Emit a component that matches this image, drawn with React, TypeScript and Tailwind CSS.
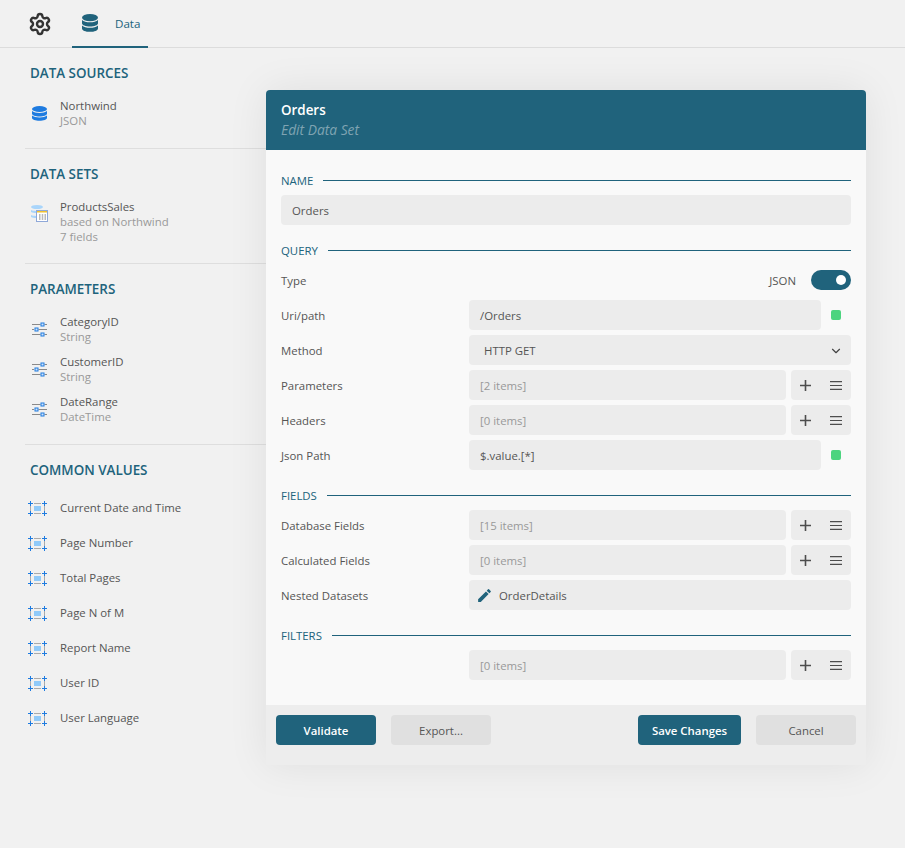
import React from "react";
import { Settings, ChevronDown } from "lucide-react";
import { MdEdit } from "react-icons/md";

const DbIcon = ({ className }: { className: string }) => (
  <svg viewBox="0 0 16 18" preserveAspectRatio="none" className={`shrink-0 ${className}`} fill="currentColor">
    <ellipse cx="8" cy="3.6" rx="8" ry="3.6" />
    <path d="M0 6v3.2c0 1.9 3.6 3.3 8 3.3s8-1.4 8-3.3V6c-1.6 1.5-4.6 2.3-8 2.3S1.6 7.5 0 6z" />
    <path d="M0 11.4v3c0 1.9 3.6 3.4 8 3.4s8-1.5 8-3.4v-3c-1.6 1.5-4.6 2.3-8 2.3s-6.4-.8-8-2.3z" />
  </svg>
);

const ParamIcon = () => (
  <svg width="16" height="15" viewBox="0 0 16 15" className="shrink-0" fill="none">
    <path d="M0 2.500H8.500M12.500 2.500H15M6.500 7.500H15M0 7.500H2M0 12.500H8.500M12.500 12.500H15" stroke="#8a8a8a" />
    <rect x="9" y="1" width="3" height="3" stroke="#1e7be0" fill="#cfe4fb" />
    <rect x="3" y="6" width="3" height="3" stroke="#1e7be0" fill="#cfe4fb" />
    <rect x="9" y="11" width="3" height="3" stroke="#1e7be0" fill="#cfe4fb" />
  </svg>
);

const ValueIcon = () => (
  <svg width="19" height="16" viewBox="0 0 19 16" className="shrink-0" fill="none">
    <rect x="6" y="6" width="7" height="5" fill="#90caf9" />
    <path d="M6 3.500H13M6 13.500H13M2.500 6V11M16.500 6V11" stroke="#aaa" />
    <path d="M0 3.500H5M2.500 1V6M14 3.500H19M16.500 1V6M0 13.500H5M2.500 11V16M14 13.500H19M16.500 11V16" stroke="#1e7be0" />
  </svg>
);

const DataSetIcon = () => (
  <svg width="17" height="17" viewBox="0 0 17 17" className="shrink-0 -ml-px" fill="none">
    <ellipse cx="6" cy="2" rx="6" ry="2" fill="#a9d5fb" />
    <path d="M0 5c1.500.600 3 .800 5 .900V8C3 8 1.500 7.700 0 7zM0 10c1.500.600 3 .800 5 .900V13C3 13 1.500 12.700 0 12z" fill="#a9d5fb" />
    <rect x="5.500" y="5.500" width="11" height="11" fill="#fff" stroke="#8fa8d8" />
    <rect x="6" y="6" width="10" height="1.500" fill="#f2c230" />
    <path d="M8 10h1.500M10.750 10h1.500M13.500 10h1.500M8 12h1.500M10.750 12h1.500M13.500 12h1.500M8 14h1.500M10.750 14h1.500M13.500 14h1.500" stroke="#777" />
  </svg>
);

const PlusGlyph = () => (
  <svg width="11" height="11" viewBox="0 0 11 11" fill="none" stroke="#4d4d4d" strokeWidth="1.600">
    <path d="M0 5.500H11M5.500 0V11" />
  </svg>
);

const MenuGlyph = () => (
  <svg width="12" height="9" viewBox="0 0 12 9" fill="none" stroke="#4d4d4d" strokeWidth="1.200">
    <path d="M0 .600H12M0 4.500H12M0 8.400H12" />
  </svg>
);

function SideHeading({ children }: { children: React.ReactNode }) {
  return <h2 className="h-5 text-[13.4px] leading-5 font-semibold text-[#20637c]">{children}</h2>;
}

function SideItem({ icon, name, lines = [], iconClass = "" }: { icon: React.ReactNode; name: string; lines?: string[]; iconClass?: string }) {
  return (
    <div className="flex items-center">
      <div className={`w-[30px] flex justify-start pl-0.5 ${iconClass}`}>{icon}</div>
      <div className="text-[11.4px] leading-[15px]">
        <div className="text-[#555]">{name}</div>
        {lines.map((l) => (
          <div key={l} className="text-[#999]">{l}</div>
        ))}
      </div>
    </div>
  );
}

function SectionTitle({ children }: { children: React.ReactNode }) {
  return (
    <div className="h-[30px] flex items-center gap-2.5">
      <span className="text-[11.4px] pt-0.5 text-[#20637c]">{children}</span>
      <div className="flex-1 h-px bg-[#20637c]" />
    </div>
  );
}

function FieldBox({ children, muted, className = "" }: { children?: React.ReactNode; muted?: boolean; className?: string }) {
  return (
    <div className={`h-[30px] rounded-sm bg-[#ececec] flex items-center px-[11px] pt-0.5 text-[11.4px] ${muted ? "text-[#999]" : "text-[#555]"} ${className}`}>
      {children}
    </div>
  );
}

function Row({ label, children }: { label?: string; children: React.ReactNode }) {
  return (
    <div className="h-[30px] flex items-center">
      <div className="w-[188px] shrink-0 pt-0.5 text-[11.4px] text-[#555]">{label}</div>
      <div className="flex-1 flex items-center min-w-0">{children}</div>
    </div>
  );
}

function ItemsRow({ label, value }: { label?: string; value: string }) {
  return (
    <Row label={label}>
      <FieldBox muted className="flex-1">{value}</FieldBox>
      <div className="ml-[5px] w-[60px] h-[30px] rounded-sm bg-[#ececec] flex items-center justify-around">
        <PlusGlyph />
        <MenuGlyph />
      </div>
    </Row>
  );
}

function StatusRow({ label, value }: { label: string; value: string }) {
  return (
    <Row label={label}>
      <FieldBox className="flex-1">{value}</FieldBox>
      <div className="mx-2.5 w-2.5 h-2.5 rounded-[2px] bg-[#4cd47f]" />
    </Row>
  );
}

function Divider() {
  return <div className="h-px bg-[#dedede]" />;
}

export default function App() {
  return (
    <div className="relative w-[905px] h-[848px] overflow-hidden bg-[#f1f1f1] font-['Open_Sans',sans-serif]">
      {/* Tabs */}
      <div className="h-12 border-b border-[#dcdcdc] flex pl-[25px]">
        <div className="w-[30px] flex items-center justify-center text-[#333] h-[47px]">
          <Settings size={24} strokeWidth={2.4} />
        </div>
        <div className="ml-[17px] w-[76px] h-12 border-b-2 border-[#20637c] flex items-center pl-[10px] gap-[17px] text-[#20637c]">
          <DbIcon className="w-4 h-[18px]" />
          <span className="text-[11.6px] pt-0.5">Data</span>
        </div>
      </div>

      {/* Side panel */}
      <div className="w-[300px] pl-[25px]">
        <div className="pl-[5px] pt-[15px] pb-5">
          <SideHeading>DATA SOURCES</SideHeading>
          <div className="mt-[15px]">
            <SideItem icon={<DbIcon className="w-[15px] h-[15px] text-[#1e7be0]" />} name="Northwind" lines={["JSON"]} />
          </div>
        </div>
        <Divider />
        <div className="pl-[5px] pt-[15px] pb-[19px]">
          <SideHeading>DATA SETS</SideHeading>
          <div className="mt-[15px]">
            <SideItem icon={<DataSetIcon />} iconClass="self-start mt-[6px]" name="ProductsSales" lines={["based on Northwind", "7 fields"]} />
          </div>
        </div>
        <Divider />
        <div className="pl-[5px] pt-[15px] pb-5">
          <SideHeading>PARAMETERS</SideHeading>
          <div className="mt-[15px] flex flex-col gap-2.5">
            <SideItem icon={<ParamIcon />} name="CategoryID" lines={["String"]} />
            <SideItem icon={<ParamIcon />} name="CustomerID" lines={["String"]} />
            <SideItem icon={<ParamIcon />} name="DateRange" lines={["DateTime"]} />
          </div>
        </div>
        <Divider />
        <div className="pl-[5px] pt-[15px]">
          <SideHeading>COMMON VALUES</SideHeading>
          <div className="mt-[20px] flex flex-col gap-[19px] -ml-0.5">
            {["Current Date and Time", "Page Number", "Total Pages", "Page N of M", "Report Name", "User ID", "User Language"].map((v) => (
              <div key={v} className="h-4 flex items-center">
                <div className="w-8"><ValueIcon /></div>
                <span className="text-[11.4px] text-[#555]">{v}</span>
              </div>
            ))}
          </div>
        </div>
      </div>

      {/* Dialog */}
      <div className="absolute left-[266px] top-[90px] w-[600px] rounded-t-sm overflow-hidden shadow-[0_0_40px_rgba(0,0,0,0.08)]">
        <div className="h-[60px] bg-[#20637c] px-[15px] pt-[11px]">
          <div className="text-[13.4px] leading-[19px] font-semibold text-white">Orders</div>
          <div className="text-[13.8px] leading-5 font-medium italic text-[#7fa3b2]">Edit Data Set</div>
        </div>
        <div className="bg-[#f9f9f9] px-[15px] pt-[15px] pb-[25px]">
          <SectionTitle>NAME</SectionTitle>
          <FieldBox>Orders</FieldBox>

          <div className="mt-2.5"><SectionTitle>QUERY</SectionTitle></div>
          <div className="flex flex-col gap-[5px]">
            <div className="h-[30px] flex items-center text-[11.4px] text-[#555]">
              <span className="flex-1 pt-0.5">Type</span>
              <span className="mr-[15px] pt-0.5">JSON</span>
              <div className="w-10 h-5 rounded-full bg-[#20637c] flex items-center justify-end pr-[5px]">
                <div className="w-2.5 h-2.5 rounded-full bg-white" />
              </div>
            </div>
            <StatusRow label="Uri/path" value="/Orders" />
            <Row label="Method">
              <FieldBox className="flex-1 justify-between pl-[15px] pr-2">
                <span>HTTP GET</span>
                <ChevronDown size={14} strokeWidth={2} className="text-[#444]" />
              </FieldBox>
            </Row>
            <ItemsRow label="Parameters" value="[2 items]" />
            <ItemsRow label="Headers" value="[0 items]" />
            <StatusRow label="Json Path" value="$.value.[*]" />
          </div>

          <div className="mt-2.5"><SectionTitle>FIELDS</SectionTitle></div>
          <div className="flex flex-col gap-[5px]">
            <ItemsRow label="Database Fields" value="[15 items]" />
            <ItemsRow label="Calculated Fields" value="[0 items]" />
            <Row label="Nested Datasets">
              <FieldBox className="flex-1 pl-[7px] gap-1.5">
                <MdEdit size={17} className="text-[#20637c] -mt-0.5" />
                <span>OrderDetails</span>
              </FieldBox>
            </Row>
          </div>

          <div className="mt-2.5"><SectionTitle>FILTERS</SectionTitle></div>
          <ItemsRow value="[0 items]" />
        </div>
        <div className="h-[60px] bg-[#ededed] flex items-start pt-2.5 px-2.5 gap-[15px] text-[11.4px]">
          <button className="w-[100px] h-[30px] pt-0.5 rounded-sm bg-[#20637c] text-white font-semibold">Validate</button>
          <button className="w-[100px] h-[30px] pt-0.5 rounded-sm bg-[#e0e0e0] text-[#555]">Export...</button>
          <div className="flex-1" />
          <button className="w-[103px] h-[30px] pt-0.5 rounded-sm bg-[#20637c] text-white font-semibold">Save Changes</button>
          <button className="w-[100px] h-[30px] pt-0.5 rounded-sm bg-[#e0e0e0] text-[#555]">Cancel</button>
        </div>
      </div>
    </div>
  );
}
